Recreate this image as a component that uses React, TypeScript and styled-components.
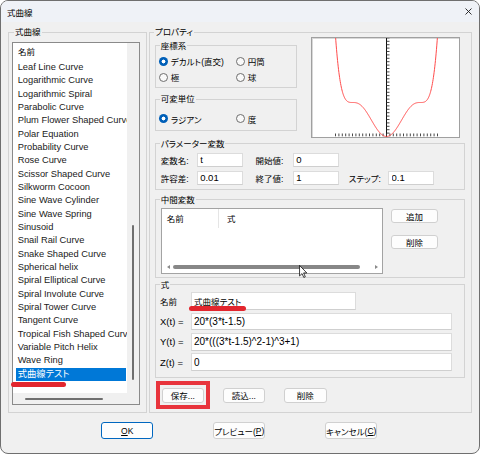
import React from "react";
import styled, { createGlobalStyle } from "styled-components";

const GlobalStyle = createGlobalStyle`
  html, body { margin: 0; padding: 0; background: #ffffff; }
  body {
    font-family: "Liberation Sans", "Noto Sans CJK JP", sans-serif;
    font-feature-settings: "palt";
    color: #000;
  }
  * { box-sizing: border-box; }
`;

const Window = styled.div`
  width: 480px;
  height: 454px;
  border: 1px solid #6f6f6f;
  border-radius: 8px;
  background: #f0f0f0;
  overflow: hidden;
  display: flex;
  flex-direction: column;
`;

const TitleBar = styled.div`
  height: 21px;
  flex: none;
  background: #eff2f7;
  display: flex;
  align-items: center;
  justify-content: space-between;
  padding: 0 7px 0 6px;
  font-size: 8.5px;
`;

const Body = styled.div`
  flex: 1;
  display: flex;
  flex-direction: column;
  padding: 4px 7px 0 7px;
`;

const Main = styled.div`
  display: flex;
  gap: 2px;
  height: 387px;
  flex: none;
`;

const GroupBox = styled.fieldset`
  margin: 0;
  border: 1px solid #d3d3d3;
  min-width: 0;
  display: flex;
  flex-direction: column;
`;

const Legend = styled.legend<{ $ml: number }>`
  padding: 0 1px;
  margin-left: ${(p) => p.$ml}px;
  font-size: 8.5px;
  line-height: 12px;
`;

const LeftGroup = styled(GroupBox)`
  width: 139px;
  padding: 4px 0 0 3px;
`;

const RightGroup = styled(GroupBox)`
  width: 323px;
  padding: 1.5px 0 0 5px;
`;

/* ---------- left list ---------- */
const ListBox = styled.div`
  position: relative;
  width: 128px;
  height: 363px;
  border: 1px solid #8a8a8a;
  background: #fff;
  display: grid;
  grid-template-columns: 114px 12px;
  grid-template-rows: 350px 11px;
`;

const ListItems = styled.div`
  overflow: hidden;
  white-space: nowrap;
  font-size: 9.3px;
`;

const ListHeader = styled.div`
  height: 18px;
  line-height: 18px;
  padding-left: 5px;
  font-size: 8.5px;
`;

const ListItem = styled.div<{ $selected?: boolean }>`
  height: 13.33px;
  line-height: 13.33px;
  margin: 0 1px 0 3px;
  padding-left: 1.7px;
  color: ${(p) => (p.$selected ? "#fff" : "#1a1a1a")};
  background: ${(p) => (p.$selected ? "#0078d7" : "transparent")};
`;

const VTrack = styled.div`
  background: #f0f0f0;
  display: flex;
  flex-direction: column;
  align-items: center;
`;

const VThumb = styled.div`
  width: 2px;
  height: 155px;
  margin-top: 182px;
  background: #6f6f6f;
  border-radius: 1px;
`;

const HTrack = styled.div`
  background: #f0f0f0;
  display: flex;
  align-items: center;
`;

const HThumb = styled.div`
  height: 2px;
  width: 78px;
  margin-left: 12px;
  background: #6f6f6f;
  border-radius: 1px;
`;

const Corner = styled.div`
  background: #f0f0f0;
`;

const RedStroke = styled.div<{ $left: number; $top: number; $width: number }>`
  position: absolute;
  left: ${(p) => p.$left}px;
  top: ${(p) => p.$top}px;
  width: ${(p) => p.$width}px;
  height: 4.5px;
  border-radius: 3px;
  background: #e2262e;
`;

/* ---------- right side ---------- */
const TopRow = styled.div`
  display: flex;
  align-items: flex-start;
`;

const LeftCol = styled.div`
  width: 142px;
  display: flex;
  flex-direction: column;
`;

const CoordGroup = styled(GroupBox)`
  padding: 1.5px 0 2px 2.8px;
`;

const UnitGroup = styled(GroupBox)`
  margin-top: 5.3px;
  padding: 5.7px 0 3px 2.8px;
`;

const RadioGrid = styled.div`
  display: grid;
  grid-template-columns: 77px auto;
  grid-auto-rows: 16px;
`;

const RadioOption = styled.label`
  display: flex;
  align-items: center;
  gap: 3px;
  font-size: 8.5px;
`;

const RadioDot = styled.span<{ $on?: boolean }>`
  width: 9px;
  height: 9px;
  border-radius: 50%;
  flex: none;
  ${(p) =>
    p.$on
      ? `background: radial-gradient(circle, #ffffff 0 1.7px, #005fb8 2.2px);`
      : `border: 1px solid #6e6e6e; background: #f9f9f9;`}
`;

const ChartBox = styled.div`
  width: 149px;
  height: 101px;
  margin: -3px 0 0 14px;
  border: 1px solid #a0a0a0;
  box-shadow: inset 1px 1px 0 #d8d8d8;
  background: #fff;
  overflow: hidden;
  svg { display: block; }
`;

const ParamGroup = styled(GroupBox)`
  width: 310px;
  padding: 3px 0 4px 4.7px;
`;

const ParamGrid = styled.div`
  display: grid;
  grid-template-columns: 36px 46px 50px 46px 49.4px 46px;
  grid-auto-rows: 14px;
  row-gap: 4.3px;
  align-items: center;
`;

const FieldLabel = styled.span<{ $pl?: number }>`
  font-size: 8.5px;
  padding-left: ${(p) => p.$pl ?? 0}px;
  white-space: nowrap;
`;

const TextBox = styled.input<{ $w?: number; $fs?: number }>`
  width: ${(p) => (p.$w ? `${p.$w}px` : "100%")};
  height: 100%;
  margin: 0;
  padding: 0 0 0 2.5px;
  border: 1px solid #dcdcdc;
  border-bottom-color: #cfcfcf;
  background: #fff;
  font-family: "Liberation Sans", "Noto Sans CJK JP", sans-serif;
  font-feature-settings: "palt";
  font-size: ${(p) => p.$fs ?? 9.5}px;
  color: #000;
  outline: none;
`;

const MidGroup = styled(GroupBox)`
  width: 310px;
  margin-top: 4px;
  padding: 2px 0 3px 4.7px;
`;

const MidRow = styled.div`
  display: flex;
  align-items: flex-start;
`;

const ListView = styled.div`
  position: relative;
  width: 222.6px;
  height: 66px;
  border: 1px solid #a3a3a3;
  background: #fff;
  display: flex;
  flex-direction: column;
`;

const LVHeader = styled.div`
  height: 19px;
  display: flex;
  align-items: center;
  font-size: 8.5px;
`;

const LVCol = styled.div<{ $w?: number; $sep?: boolean }>`
  ${(p) => (p.$w ? `width: ${p.$w}px;` : "flex: 1;")}
  height: 100%;
  display: flex;
  align-items: center;
  padding-left: ${(p) => (p.$sep ? 7.7 : 5)}px;
  border-left: ${(p) => (p.$sep ? "1px solid #e5e5e5" : "none")};
`;

const LVSpacer = styled.div`
  flex: 1;
`;

const LVScroll = styled.div`
  height: 12px;
  display: flex;
  align-items: center;
  padding-left: 5px;
`;

const ArrowLeft = styled.span`
  width: 0;
  height: 0;
  border-top: 2.5px solid transparent;
  border-bottom: 2.5px solid transparent;
  border-right: 3px solid #8a8a8a;
`;

const ArrowRight = styled.span`
  width: 0;
  height: 0;
  margin-left: 15px;
  border-top: 2.5px solid transparent;
  border-bottom: 2.5px solid transparent;
  border-left: 3px solid #8a8a8a;
`;

const LVThumb = styled.div`
  width: 186.7px;
  height: 3.5px;
  margin-left: 3.5px;
  border-radius: 2px;
  background: #878787;
`;

const Cursor = styled.svg`
  position: absolute;
  left: 137px;
  top: 56px;
`;

const SideButtons = styled.div`
  display: flex;
  flex-direction: column;
  gap: 12px;
  margin-left: 7.4px;
  padding-top: 1.7px;
`;

const Button = styled.button<{ $w: number; $h: number; $default?: boolean }>`
  width: ${(p) => p.$w}px;
  height: ${(p) => p.$h}px;
  margin: 0;
  padding: 0;
  border: 1px solid ${(p) => (p.$default ? "#0067c0" : "#d0d0d0")};
  border-radius: 3px;
  background: #fdfdfd;
  font-family: "Liberation Sans", "Noto Sans CJK JP", sans-serif;
  font-feature-settings: "palt";
  font-size: 8.5px;
  color: #000;
  display: flex;
  align-items: center;
  justify-content: center;
  white-space: nowrap;
`;

const FormulaGroup = styled(GroupBox)`
  width: 310px;
  margin-top: 1.2px;
  padding: 1.2px 0 5.6px 4px;
`;

const FormulaGrid = styled.div`
  display: grid;
  grid-template-columns: 30.5px 261px;
  grid-auto-rows: 17.7px;
  row-gap: 2.7px;
  align-items: center;
`;

const FormulaLabel = styled.span`
  font-size: 9.5px;
  white-space: nowrap;
`;

const ActionRow = styled.div`
  display: flex;
  gap: 18.7px;
  margin-top: 10px;
  padding-left: 6.7px;
`;

const Highlight = styled.span`
  position: relative;
  display: flex;
`;

const RedFrame = styled.span`
  position: absolute;
  left: -6px;
  top: -6.6px;
  width: 54.3px;
  height: 27.6px;
  border: 4px solid #e8343c;
`;

const DialogButtons = styled.div`
  display: flex;
  justify-content: center;
  gap: 60px;
  margin-top: 9.3px;
  padding-right: 1.5px;
`;

const curves = [
  "Leaf Line Curve",
  "Logarithmic Curve",
  "Logarithmic Spiral",
  "Parabolic Curve",
  "Plum Flower Shaped Curve",
  "Polar Equation",
  "Probability Curve",
  "Rose Curve",
  "Scissor Shaped Curve",
  "Silkworm Cocoon",
  "Sine Wave Cylinder",
  "Sine Wave Spring",
  "Sinusoid",
  "Snail Rail Curve",
  "Snake Shaped Curve",
  "Spherical helix",
  "Spiral Elliptical Curve",
  "Spiral Involute Curve",
  "Spiral Tower Curve",
  "Tangent Curve",
  "Tropical Fish Shaped Curve",
  "Variable Pitch Helix",
  "Wave Ring",
  "式曲線テスト",
];

const Chart: React.FC = () => {
  const ox = 74.5;
  const oy = 98.5;
  const s = 34;
  const pts: string[] = [];
  for (let i = 0; i <= 300; i++) {
    const u = -1.5 + i * 0.01;
    const f = Math.pow(u * u - 1, 3) + 1;
    pts.push(`${(ox + s * u).toFixed(2)},${(oy - s * f).toFixed(2)}`);
  }
  const vticks = Array.from({ length: 29 }, (_, k) => oy - 3.4 * (k + 1));
  const hticks = Array.from({ length: 31 }, (_, k) => ox + 3.4 * (k - 15));
  return (
    <ChartBox>
      <svg width="147" height="99" viewBox="0 0 147 99">
        <line x1={ox} y1="0" x2={ox} y2="99" stroke="#111" strokeWidth="1" />
        {vticks.map((y, i) => (
          <line key={`v${i}`} x1={ox} y1={y} x2={ox + 3} y2={y} stroke="#333" strokeWidth="0.9" />
        ))}
        {hticks.map((x, i) => (
          <line key={`h${i}`} x1={x} y1="95.5" x2={x} y2="98.3" stroke="#333" strokeWidth="0.9" />
        ))}
        <polyline points={pts.join(" ")} fill="none" stroke="#ff4b4b" strokeWidth="1" />
      </svg>
    </ChartBox>
  );
};

export default function App() {
  return (
    <>
      <GlobalStyle />
      <Window>
        <TitleBar>
          <span>式曲線</span>
          <svg width="7" height="7" viewBox="0 0 7 7">
            <path d="M0.5 0.5 L6.5 6.5 M6.5 0.5 L0.5 6.5" stroke="#1a1a1a" strokeWidth="0.9" fill="none" />
          </svg>
        </TitleBar>
        <Body>
          <Main>
            <LeftGroup>
              <Legend $ml={2}>式曲線</Legend>
              <ListBox>
                <ListItems>
                  <ListHeader>名前</ListHeader>
                  {curves.map((c, i) => (
                    <ListItem key={c} $selected={i === curves.length - 1}>
                      {c}
                    </ListItem>
                  ))}
                </ListItems>
                <VTrack>
                  <VThumb />
                </VTrack>
                <HTrack>
                  <HThumb />
                </HTrack>
                <Corner />
                <RedStroke $left={-2} $top={339} $width={55} />
              </ListBox>
            </LeftGroup>

            <RightGroup>
              <Legend $ml={-1}>プロパティ</Legend>
              <TopRow>
                <LeftCol>
                  <CoordGroup>
                    <Legend $ml={1}>座標系</Legend>
                    <RadioGrid>
                      <RadioOption>
                        <RadioDot $on />
                        デカルト(直交)
                      </RadioOption>
                      <RadioOption>
                        <RadioDot />
                        円筒
                      </RadioOption>
                      <RadioOption>
                        <RadioDot />
                        極
                      </RadioOption>
                      <RadioOption>
                        <RadioDot />
                        球
                      </RadioOption>
                    </RadioGrid>
                  </CoordGroup>
                  <UnitGroup>
                    <Legend $ml={1}>可変単位</Legend>
                    <RadioGrid>
                      <RadioOption>
                        <RadioDot $on />
                        ラジアン
                      </RadioOption>
                      <RadioOption>
                        <RadioDot />
                        度
                      </RadioOption>
                    </RadioGrid>
                  </UnitGroup>
                </LeftCol>
                <Chart />
              </TopRow>

              <ParamGroup>
                <Legend $ml={-1}>パラメーター変数</Legend>
                <ParamGrid>
                  <FieldLabel>変数名:</FieldLabel>
                  <TextBox readOnly defaultValue="t" />
                  <FieldLabel $pl={12.7}>開始値:</FieldLabel>
                  <TextBox readOnly defaultValue="0" />
                  <span />
                  <span />
                  <FieldLabel>許容差:</FieldLabel>
                  <TextBox readOnly defaultValue="0.01" />
                  <FieldLabel $pl={12.7}>終了値:</FieldLabel>
                  <TextBox readOnly defaultValue="1" />
                  <FieldLabel $pl={10}>ステップ:</FieldLabel>
                  <TextBox readOnly defaultValue="0.1" />
                </ParamGrid>
              </ParamGroup>

              <MidGroup>
                <Legend $ml={-1}>中間変数</Legend>
                <MidRow>
                  <ListView>
                    <LVHeader>
                      <LVCol $w={56.6}>名前</LVCol>
                      <LVCol $sep>式</LVCol>
                    </LVHeader>
                    <LVSpacer />
                    <LVScroll>
                      <ArrowLeft />
                      <LVThumb />
                      <ArrowRight />
                    </LVScroll>
                    <Cursor width="8.5" height="13" viewBox="0 0 12 19">
                      <path
                        d="M0.6 0.6 L0.6 16 L4.2 12.6 L6.8 18.2 L9 17.2 L6.5 11.6 L11.2 11.6 Z"
                        fill="#fff"
                        stroke="#000"
                        strokeWidth="1.1"
                        strokeLinejoin="round"
                      />
                    </Cursor>
                  </ListView>
                  <SideButtons>
                    <Button $w={47.6} $h={14}>追加</Button>
                    <Button $w={47.6} $h={14}>削除</Button>
                  </SideButtons>
                </MidRow>
              </MidGroup>

              <FormulaGroup>
                <Legend $ml={-0.3}>式</Legend>
                <FormulaGrid>
                  <FieldLabel>名前</FieldLabel>
                  <Highlight>
                    <TextBox readOnly defaultValue="式曲線テスト" $w={165} $fs={8.5} style={{ height: "17.7px" }} />
                    <RedStroke $left={-1.7} $top={14} $width={56.7} />
                  </Highlight>
                  <FormulaLabel>X(t) =</FormulaLabel>
                  <TextBox readOnly defaultValue="20*(3*t-1.5)" $fs={10} />
                  <FormulaLabel>Y(t) =</FormulaLabel>
                  <TextBox readOnly defaultValue="20*(((3*t-1.5)^2-1)^3+1)" $fs={10} />
                  <FormulaLabel>Z(t) =</FormulaLabel>
                  <TextBox readOnly defaultValue="0" $fs={10} />
                </FormulaGrid>
              </FormulaGroup>

              <ActionRow>
                <Highlight>
                  <Button $w={42.3} $h={15}>保存...</Button>
                  <RedFrame />
                </Highlight>
                <Button $w={42.3} $h={15}>読込...</Button>
                <Button $w={43} $h={15}>削除</Button>
              </ActionRow>
            </RightGroup>
          </Main>

          <DialogButtons>
            <Button $w={52} $h={17} $default>
              <u>O</u>K
            </Button>
            <Button $w={52} $h={17}>
              プレビュー(<u>P</u>)
            </Button>
            <Button $w={52} $h={17}>
              キャンセル(<u>C</u>)
            </Button>
          </DialogButtons>
        </Body>
      </Window>
    </>
  );
}
